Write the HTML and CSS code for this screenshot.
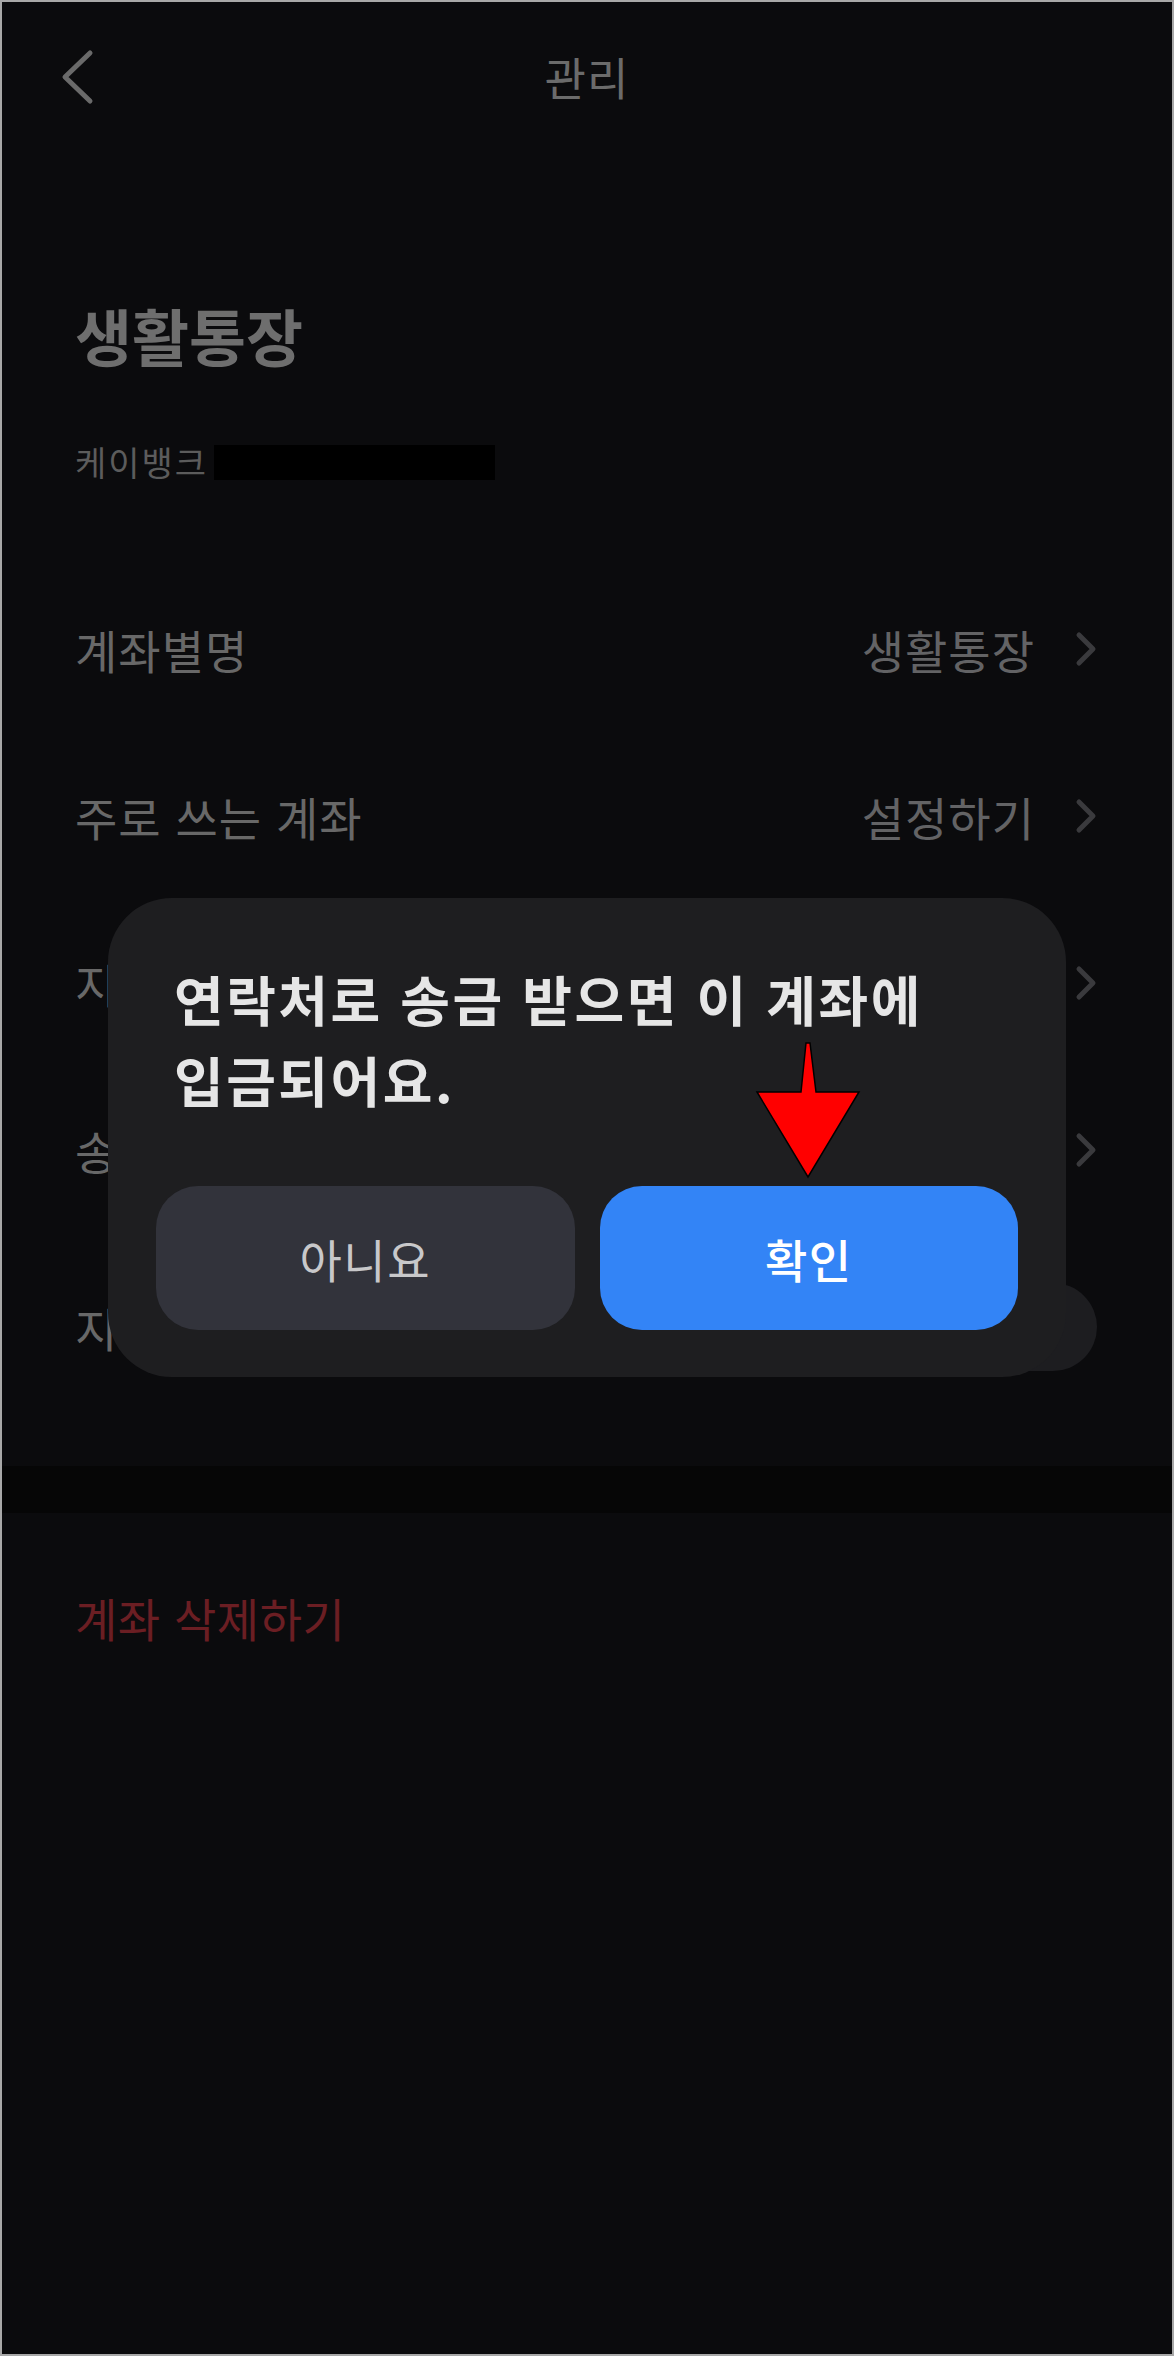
FILE: index.html
```html
<!DOCTYPE html>
<html lang="ko">
<head>
<meta charset="utf-8">
<title>관리</title>
<link rel="stylesheet" href="styles.css">
</head>
<body>
<div class="screen">
  <header class="topbar">
    <svg class="back" width="34" height="56" viewBox="0 0 34 56"><path d="M29 4 L4 28 L29 52" fill="none" stroke="#6a6a6a" stroke-width="5" stroke-linecap="round" stroke-linejoin="round"/></svg>
    <h1 class="topbar-title">관리</h1>
  </header>

  <section class="account">
    <h2 class="account-name">생활통장</h2>
    <div class="account-sub"><span class="bank">케이뱅크</span><span class="masked"></span></div>
  </section>

  <ul class="menu">
    <li class="row">
      <span class="label">계좌별명</span>
      <span class="value">생활통장</span>
      <svg class="chev" width="22" height="36" viewBox="0 0 22 36"><path d="M4 4 L18 18 L4 32" fill="none" stroke="#3a3a3d" stroke-width="5" stroke-linecap="round" stroke-linejoin="round"/></svg>
    </li>
    <li class="row">
      <span class="label">주로 쓰는 계좌</span>
      <span class="value">설정하기</span>
      <svg class="chev" width="22" height="36" viewBox="0 0 22 36"><path d="M4 4 L18 18 L4 32" fill="none" stroke="#3a3a3d" stroke-width="5" stroke-linecap="round" stroke-linejoin="round"/></svg>
    </li>
    <li class="row">
      <span class="label">지연이체</span>
      <svg class="chev" width="22" height="36" viewBox="0 0 22 36"><path d="M4 4 L18 18 L4 32" fill="none" stroke="#3a3a3d" stroke-width="5" stroke-linecap="round" stroke-linejoin="round"/></svg>
    </li>
    <li class="row">
      <span class="label">송금 한도</span>
      <svg class="chev" width="22" height="36" viewBox="0 0 22 36"><path d="M4 4 L18 18 L4 32" fill="none" stroke="#3a3a3d" stroke-width="5" stroke-linecap="round" stroke-linejoin="round"/></svg>
    </li>
    <li class="row row-switch">
      <span class="label">지갑 숨김</span>
      <span class="switch"></span>
    </li>
  </ul>

  <div class="divider"></div>

  <div class="danger">계좌 삭제하기</div>

  <div class="dialog">
    <p class="dialog-text">연락처로 송금 받으면 이 계좌에<br>입금되어요.</p>
    <div class="dialog-actions">
      <button class="btn btn-cancel">아니요</button>
      <button class="btn btn-ok">확인</button>
    </div>
  </div>

  <svg class="pointer" width="110" height="142" viewBox="0 0 110 142"><polygon points="52,3 56,3 62,52 105,52 54,137 3,52 47,52" fill="#ff0000" stroke="#000" stroke-width="1.5" stroke-linejoin="miter"/></svg>
</div>
</body>
</html>
```

FILE: styles.css
```css
* { box-sizing: border-box; margin: 0; padding: 0; }

body {
  background: #a8a8a8;
  font-family: "Noto Sans CJK KR", "Noto Sans", sans-serif;
}

.screen {
  position: relative;
  width: 1174px;
  height: 2356px;
  border: 2px solid #a8a8a8;
  background: #0b0b0d;
  overflow: hidden;
}

/* top bar */
.topbar {
  position: relative;
  height: 148px;
  display: flex;
  align-items: center;
  justify-content: center;
}
.back {
  position: absolute;
  left: 59px;
  top: 47px;
}
.topbar-title {
  font-size: 45px;
  font-weight: 400;
  color: #6b6b6b;
  letter-spacing: 1px;
  line-height: 1.2;
  margin-top: 2px;
}

/* account header */
.account {
  padding: 149px 0 0 73px;
}
.account-name {
  font-size: 62px;
  font-weight: 700;
  line-height: 72px;
  letter-spacing: 0;
  color: #6e6e6e;
}
.account-sub {
  margin-top: 71px;
  height: 40px;
  display: flex;
  align-items: center;
}
.bank {
  font-size: 34px;
  line-height: 40px;
  letter-spacing: 2px;
  color: #5c5c5c;
}
.masked {
  display: inline-block;
  width: 281px;
  height: 35px;
  margin-left: 6px;
  background: #000;
}

/* settings list */
.menu {
  list-style: none;
  margin-top: 83px;
}
.row {
  height: 167px;
  padding: 0 75px 0 73px;
  display: flex;
  align-items: center;
}
.row-switch {
  height: 187px;
}
.label {
  flex: 1;
  font-size: 46px;
  line-height: 54px;
  letter-spacing: 1px;
  color: #686868;
}
.value {
  font-size: 46px;
  line-height: 54px;
  letter-spacing: 1px;
  color: #636365;
  margin-right: 40px;
}
.chev {
  flex: none;
}
.switch {
  width: 152px;
  height: 88px;
  border-radius: 44px;
  background: #1d1d20;
}

.divider {
  margin-top: 46px;
  height: 47px;
  background: #060606;
}

.danger {
  padding: 77px 0 0 73px;
  font-size: 46px;
  line-height: 54px;
  letter-spacing: 0.5px;
  color: #6b1e23;
}

/* confirm dialog */
.dialog {
  position: absolute;
  left: 106px;
  top: 896px;
  width: 958px;
  height: 479px;
  border-radius: 64px;
  background: #1e1e20;
  padding: 60px 48px 47px;
  display: flex;
  flex-direction: column;
}
.dialog-text {
  padding-left: 18px;
  font-size: 54px;
  font-weight: 700;
  line-height: 81px;
  letter-spacing: 2.5px;
  color: #e6e6e6;
}
.dialog-actions {
  margin-top: auto;
  display: flex;
  gap: 25px;
}
.btn {
  flex: 1;
  height: 144px;
  border: none;
  border-radius: 42px;
  font-family: inherit;
  font-size: 46px;
  letter-spacing: 1.5px;
}
.btn-cancel {
  background: #32333b;
  color: #c8c8ca;
}
.btn-ok {
  background: #3384f6;
  color: #ffffff;
  font-weight: 500;
}

.pointer {
  position: absolute;
  left: 752px;
  top: 1038px;
}
```
